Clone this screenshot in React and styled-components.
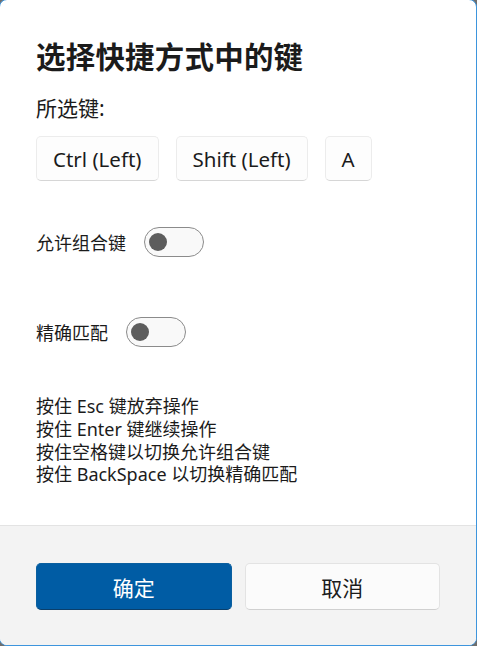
import React from "react";
import styled, { createGlobalStyle } from "styled-components";

const Global = createGlobalStyle`
  html, body { margin: 0; padding: 0; }
  body {
    background: #6e6e6e;
    width: 477px;
    height: 646px;
    overflow: hidden;
    font-family: "Noto Sans", "Noto Sans CJK SC", sans-serif;
    color: #1b1b1b;
  }
`;

const Dialog = styled.div`
  box-sizing: border-box;
  margin: -1px 0 0 -1px;
  width: 478px;
  height: 647px;
  border: 1px solid #3d95dd;
  border-radius: 8px;
  background: #ffffff;
  overflow: hidden;
  display: flex;
  flex-direction: column;
`;

const Body = styled.div`
  flex: 1;
  padding: 35px 36px 0 36px;
  display: flex;
  flex-direction: column;
`;

const Title = styled.h1`
  margin: 0;
  font-size: 29.5px;
  font-weight: 700;
  line-height: 44px;
  letter-spacing: 0.2px;
  color: #1b1b1b;
`;

const Label = styled.div`
  margin-top: 15px;
  font-size: 21px;
  line-height: 28px;
`;

const Keys = styled.div`
  display: flex;
  gap: 17px;
  margin-top: 14px;
`;

const Key = styled.div`
  box-sizing: border-box;
  height: 45px;
  padding: 0 16px;
  display: flex;
  align-items: center;
  font-size: 20.5px;
  background: #fdfdfd;
  border: 1px solid #ececec;
  border-bottom-color: #d6d6d6;
  border-radius: 5px;
`;

const ToggleRow = styled.div`
  display: flex;
  align-items: center;
  gap: 18px;
  margin-top: ${(p) => p.$mt}px;
  font-size: 18px;
`;

const Toggle = styled.div`
  box-sizing: border-box;
  width: 60px;
  height: 30px;
  border: 1.5px solid #8b8b8b;
  border-radius: 15px;
  background: #f9f9f9;
  display: flex;
  align-items: center;
  padding-left: 4px;
`;

const Knob = styled.div`
  width: 18px;
  height: 18px;
  border-radius: 50%;
  background: #5d5d5d;
`;

const Help = styled.div`
  margin-top: 48px;
  font-size: 18px;
  line-height: 22.8px;
`;

const Footer = styled.div`
  box-sizing: border-box;
  height: 120px;
  background: #f3f3f3;
  border-top: 1px solid #e3e3e3;
  padding: 37px 36px 0 36px;
  display: flex;
  gap: 13px;
`;

const Button = styled.div`
  box-sizing: border-box;
  flex: 1;
  height: 47px;
  border-radius: 5px;
  display: flex;
  align-items: center;
  justify-content: center;
  font-size: 21px;
  background: ${(p) => (p.$primary ? "#005ca4" : "#fbfbfb")};
  color: ${(p) => (p.$primary ? "#ffffff" : "#1b1b1b")};
  border: 1px solid ${(p) => (p.$primary ? "#0a5f9f" : "#e3e3e3")};
  border-bottom-color: ${(p) => (p.$primary ? "#0a3f6b" : "#d0d0d0")};
`;

export default function App() {
  return (
    <>
      <Global />
      <Dialog>
        <Body>
          <Title>选择快捷方式中的键</Title>
          <Label>所选键:</Label>
          <Keys>
            <Key>Ctrl (Left)</Key>
            <Key>Shift (Left)</Key>
            <Key>A</Key>
          </Keys>
          <ToggleRow $mt={46}>
            <span>允许组合键</span>
            <Toggle>
              <Knob />
            </Toggle>
          </ToggleRow>
          <ToggleRow $mt={60}>
            <span>精确匹配</span>
            <Toggle>
              <Knob />
            </Toggle>
          </ToggleRow>
          <Help>
            <div>按住 Esc 键放弃操作</div>
            <div>按住 Enter 键继续操作</div>
            <div>按住空格键以切换允许组合键</div>
            <div>按住 BackSpace 以切换精确匹配</div>
          </Help>
        </Body>
        <Footer>
          <Button $primary>确定</Button>
          <Button>取消</Button>
        </Footer>
      </Dialog>
    </>
  );
}
